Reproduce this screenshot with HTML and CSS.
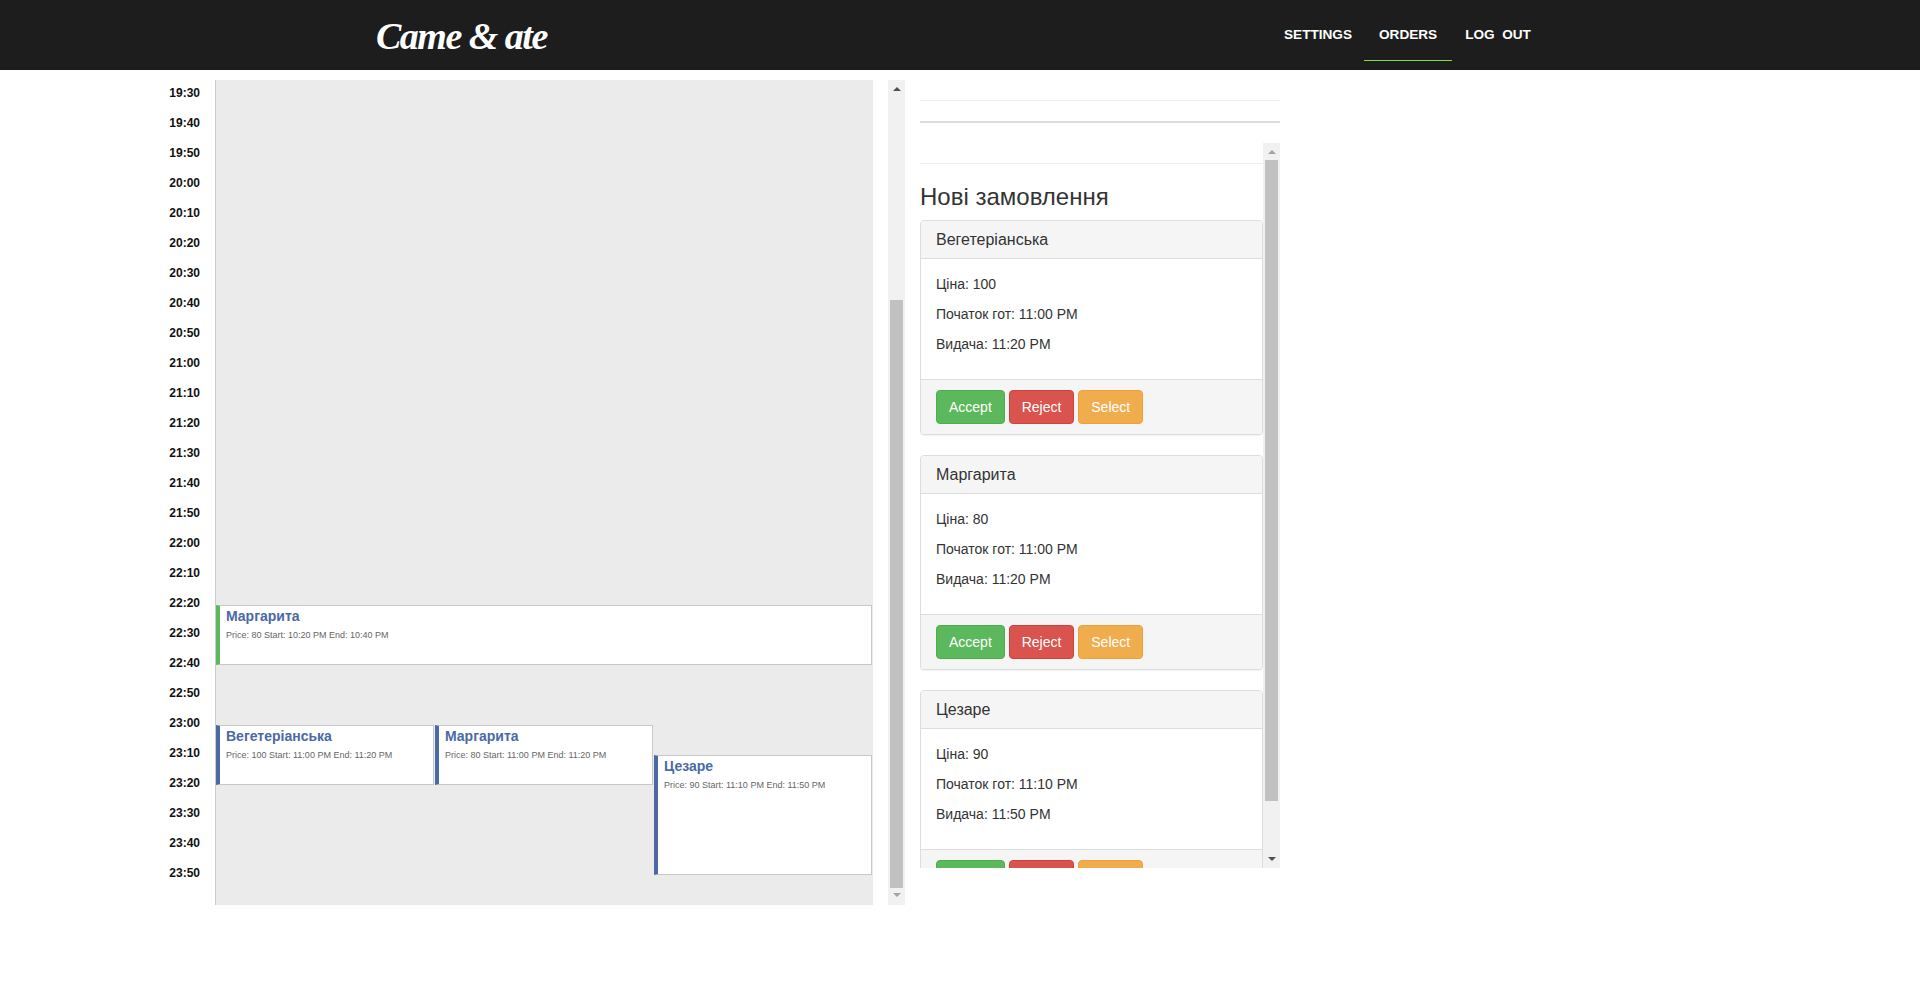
FILE: index.html
```html
<!DOCTYPE html>
<html lang="uk">
<head>
  <meta charset="UTF-8">
  <meta name="viewport" content="width=device-width, initial-scale=1.0">
  <title>Came &amp; ate</title>
  <link rel="stylesheet" href="styles.css">
</head>
<body>
  <header class="topbar">
    <a class="logo" href="#">Came &amp; ate</a>
    <nav class="topnav">
      <a href="#">SETTINGS</a>
      <a class="active" href="#">ORDERS</a>
      <a href="#">LOG&nbsp; OUT</a>
    </nav>
  </header>

  <main class="page">
    <section class="schedule">
      <div class="times">
        <div>19:30</div><div>19:40</div><div>19:50</div>
        <div>20:00</div><div>20:10</div><div>20:20</div><div>20:30</div><div>20:40</div><div>20:50</div>
        <div>21:00</div><div>21:10</div><div>21:20</div><div>21:30</div><div>21:40</div><div>21:50</div>
        <div>22:00</div><div>22:10</div><div>22:20</div><div>22:30</div><div>22:40</div><div>22:50</div>
        <div>23:00</div><div>23:10</div><div>23:20</div><div>23:30</div><div>23:40</div><div>23:50</div>
      </div>
      <div class="board">
        <div class="event event-done ev-1">
          <div class="event-title">Маргарита</div>
          <div class="event-desc">Price: 80 Start: 10:20 PM End: 10:40 PM</div>
        </div>
        <div class="event ev-2">
          <div class="event-title">Вегетеріанська</div>
          <div class="event-desc">Price: 100 Start: 11:00 PM End: 11:20 PM</div>
        </div>
        <div class="event ev-3">
          <div class="event-title">Маргарита</div>
          <div class="event-desc">Price: 80 Start: 11:00 PM End: 11:20 PM</div>
        </div>
        <div class="event ev-4">
          <div class="event-title">Цезаре</div>
          <div class="event-desc">Price: 90 Start: 11:10 PM End: 11:50 PM</div>
        </div>
      </div>
      <div class="scrollbar scrollbar-board">
        <span class="arrow-up"></span>
        <span class="thumb"></span>
        <span class="arrow-down off"></span>
      </div>
    </section>

    <aside class="sidebar">
      <hr class="line">
      <hr class="line line-thick">
      <div class="orders-box">
        <div class="orders">
          <hr class="line">
          <h3>Нові замовлення</h3>

          <div class="panel">
            <div class="panel-heading">Вегетеріанська</div>
            <div class="panel-body">
              <p>Ціна: 100</p>
              <p>Початок гот: 11:00 PM</p>
              <p>Видача: 11:20 PM</p>
            </div>
            <div class="panel-footer">
              <button class="btn btn-success">Accept</button>
              <button class="btn btn-danger">Reject</button>
              <button class="btn btn-warning">Select</button>
            </div>
          </div>

          <div class="panel">
            <div class="panel-heading">Маргарита</div>
            <div class="panel-body">
              <p>Ціна: 80</p>
              <p>Початок гот: 11:00 PM</p>
              <p>Видача: 11:20 PM</p>
            </div>
            <div class="panel-footer">
              <button class="btn btn-success">Accept</button>
              <button class="btn btn-danger">Reject</button>
              <button class="btn btn-warning">Select</button>
            </div>
          </div>

          <div class="panel">
            <div class="panel-heading">Цезаре</div>
            <div class="panel-body">
              <p>Ціна: 90</p>
              <p>Початок гот: 11:10 PM</p>
              <p>Видача: 11:50 PM</p>
            </div>
            <div class="panel-footer">
              <button class="btn btn-success">Accept</button>
              <button class="btn btn-danger">Reject</button>
              <button class="btn btn-warning">Select</button>
            </div>
          </div>
        </div>
        <div class="scrollbar scrollbar-orders">
          <span class="arrow-up off"></span>
          <span class="thumb"></span>
          <span class="arrow-down"></span>
        </div>
      </div>
    </aside>
  </main>
</body>
</html>
```

FILE: styles.css
```css
* {
  box-sizing: border-box;
}
body {
  font-family: "Liberation Sans", Arial, sans-serif;
  font-size: 14px;
  line-height: 20px;
  color: #333;
  margin: 0;
  background: #fff;
}

/* top bar */
.topbar {
  height: 70px;
  background-color: #1d1d1d;
  display: flex;
  padding-left: 376px;
}
.logo {
  width: 900px;
  padding-top: 13px;
  font-family: "Liberation Serif", serif;
  font-size: 38px;
  line-height: 46px;
  letter-spacing: -1.5px;
  font-weight: bold;
  font-style: italic;
  color: #fff;
  text-decoration: none;
}
.topnav {
  display: flex;
  margin-left: -5px;
}
.topnav a {
  height: 61px;
  padding: 25px 12px 0 13px;
  font-size: 13.6px;
  font-weight: bold;
  color: #fff;
  text-decoration: none;
}
.topnav a.active {
  padding: 25px 15px 0;
  border-bottom: 1px solid #82dc50;
}

/* page */
.page {
  display: flex;
  padding-top: 10px;
}
.schedule {
  display: flex;
  width: 920px;
  height: 825px;
}
.times {
  width: 215px;
  padding: 3px 15px 0 0;
  text-align: right;
  font-size: 12px;
  font-weight: bold;
  color: #111;
}
.times div {
  height: 30px;
  line-height: 20px;
}
.board {
  position: relative;
  width: 658px;
  background-color: #ebebeb;
  border-left: 1px solid #ccc;
}
.event {
  position: absolute;
  padding: 0 0 0 6px;
  width: 218px;
  height: 60px;
  background-color: #fff;
  border: 1px solid #c8c8c8;
  border-left: 4px solid #4a69a5;
}
.event-done {
  border-left-color: #5cb85c;
}
.ev-1 {
  left: 0;
  top: 525px;
  width: 656px;
}
.ev-2 {
  left: 0;
  top: 645px;
}
.ev-3 {
  left: 219px;
  top: 645px;
}
.ev-4 {
  left: 438px;
  top: 675px;
  height: 120px;
}
.event-title {
  font-size: 14px;
  line-height: 20px;
  font-weight: bold;
  color: #4a69a5;
}
.event-desc {
  margin-top: 2px;
  font-size: 9px;
  line-height: 14px;
  color: #666;
}

/* fake scrollbars, same look as the browser ones */
.scrollbar {
  flex: none;
  display: flex;
  flex-direction: column;
  align-items: center;
  width: 17px;
  background-color: #f1f1f1;
}
.scrollbar-board {
  margin-left: 15px;
}
.scrollbar .thumb {
  width: 13px;
  background-color: #c1c1c1;
}
.scrollbar-board .thumb {
  height: 588px;
  margin-top: 203px;
}
.scrollbar-orders .thumb {
  height: 641px;
  margin-top: 0;
}
.arrow-up, .arrow-down {
  flex: none;
  display: block;
  width: 0;
  height: 0;
  border-left: 4px solid transparent;
  border-right: 4px solid transparent;
}
.arrow-up {
  margin: 7px 0 6px;
  border-bottom: 4px solid #505050;
}
.arrow-down {
  margin-top: 5px;
  border-top: 4px solid #505050;
}
.scrollbar-orders .arrow-down {
  margin-top: 56px;
}
.arrow-up.off {
  border-bottom-color: #a3a3a3;
}
.arrow-down.off {
  border-top-color: #a3a3a3;
}

/* right column */
.sidebar {
  width: 360px;
}
.line {
  margin: 20px 0;
  border: 0;
  border-top: 1px solid #eee;
}
.line-thick {
  border-top: 2px solid #ddd;
}
.orders-box {
  display: flex;
  height: 725px;
}
.orders {
  width: 343px;
  overflow: hidden;
}
h3 {
  margin: 20px 0 10px;
  font-size: 24px;
  line-height: 26px;
  font-weight: normal;
}
.panel {
  margin-bottom: 20px;
  background-color: #fff;
  border: 1px solid #ddd;
  border-radius: 4px;
  box-shadow: 0 1px 1px rgba(0, 0, 0, .05);
}
.panel-heading {
  height: 38px;
  padding: 10px 15px;
  font-size: 16px;
  line-height: 18px;
  background-color: #f5f5f5;
  border-bottom: 1px solid #ddd;
  border-radius: 3px 3px 0 0;
}
.panel-body {
  padding: 15px;
}
.panel-body p {
  margin: 0 0 10px;
}
.panel-footer {
  padding: 10px 15px;
  background-color: #f5f5f5;
  border-top: 1px solid #ddd;
  border-radius: 0 0 3px 3px;
}
.btn {
  display: inline-block;
  padding: 6px 12px;
  font-family: "Liberation Sans", Arial, sans-serif;
  font-size: 14px;
  line-height: 20px;
  color: #fff;
  border: 1px solid transparent;
  border-radius: 4px;
  cursor: pointer;
}
.btn-success {
  background-color: #5cb85c;
  border-color: #4cae4c;
}
.btn-danger {
  background-color: #d9534f;
  border-color: #d43f3a;
}
.btn-warning {
  background-color: #f0ad4e;
  border-color: #eea236;
}
```
